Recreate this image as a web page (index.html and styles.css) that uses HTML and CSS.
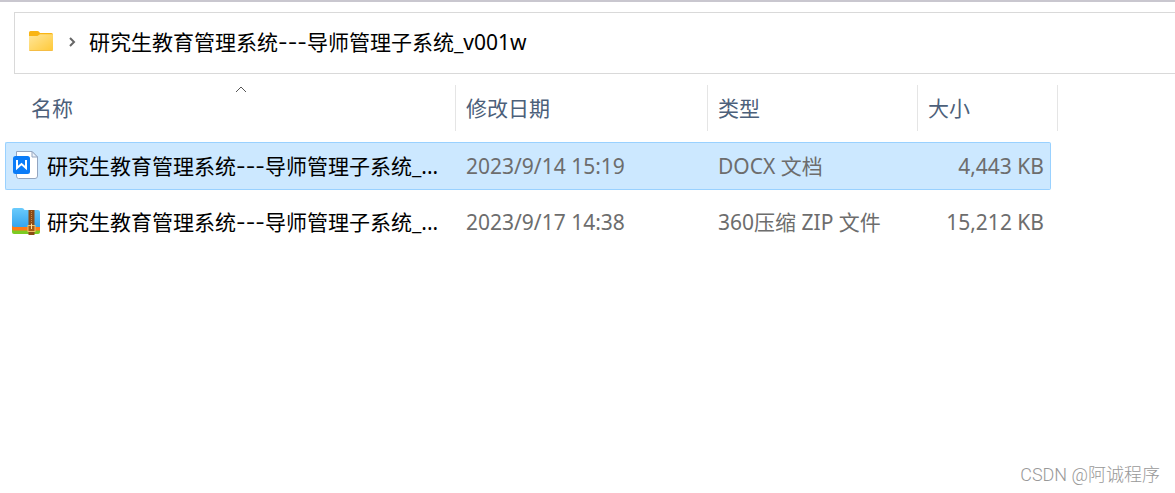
FILE: index.html
```html
<!DOCTYPE html>
<html lang="zh-CN">
<head>
    <meta charset="UTF-8">
    <meta name="viewport" content="width=device-width, initial-scale=1.0">
    <title>研究生教育管理系统</title>
    <link rel="stylesheet" href="styles.css">
</head>
<body>
    <nav class="address-bar">
        <svg class="folder-icon" viewBox="0 0 26 22">
            <defs>
                <linearGradient id="folder" x1="0" y1="0" x2="1" y2="1">
                    <stop offset="0" stop-color="#ffe69b"/>
                    <stop offset="1" stop-color="#ffc937"/>
                </linearGradient>
            </defs>
            <path d="M1 2.500Q1 1 2.500 1H9.500Q11 1 12 3H23.500Q25 3 25 4.500V12H1Z" fill="#f9b515"/>
            <path d="M1 6H9.500L12 4.200H25V19.500Q25 21 23.500 21H2.500Q1 21 1 19.500Z" fill="url(#folder)"/>
            <path d="M1.500 20.500H24.500" stroke="#f5bd45" fill="none"/>
        </svg>
        <svg class="chevron" viewBox="0 0 8 12">
            <path d="M2 2L6 6L2 10" fill="none" stroke="#666" stroke-width="2"/>
        </svg>
        <span>研究生教育管理系统<span class="dash">---</span>导师管理子系统_v001w</span>
    </nav>

    <main>
        <table>
            <colgroup>
                <col>
                <col class="col-date">
                <col class="col-type">
                <col class="col-size">
                <col class="col-end">
            </colgroup>
            <thead>
                <tr>
                    <th>
                        <div class="head head-name">名称
                            <svg class="sort-icon" viewBox="0 0 12 7">
                                <path d="M1 6L6 1L11 6" fill="none" stroke="#555"/>
                            </svg>
                        </div>
                    </th>
                    <th><div class="head">修改日期</div></th>
                    <th><div class="head">类型</div></th>
                    <th colspan="2"><div class="head">大小</div></th>
                </tr>
            </thead>
            <tbody>
                <tr class="selected">
                    <td class="name">
                        <div class="file">
                            <svg class="file-icon" viewBox="0 0 30 30">
                                <path d="M5.500 1.500H21L26.500 7V26Q26.500 28.500 24 28.500H7.500Q5.500 28.500 5.500 26Z" fill="#fff" stroke="#93a5c0"/>
                                <path d="M21 1.500V7H26.500Z" fill="#eef3fa" stroke="#93a5c0"/>
                                <rect x="2" y="6" width="17" height="18" rx="2.500" fill="#0a7cf8"/>
                                <path d="M6 10V18L10.500 14L15 18V10" fill="none" stroke="#fff" stroke-width="2"/>
                            </svg>
                            <span>研究生教育管理系统<span class="dash">---</span>导师管理子系统_...</span>
                        </div>
                    </td>
                    <td>2023/9/14 15:19</td>
                    <td>DOCX 文档</td>
                    <td class="size">4,443 KB</td>
                </tr>
                <tr>
                    <td class="name">
                        <div class="file">
                            <svg class="file-icon" viewBox="0 0 30 30">
                                <defs>
                                    <linearGradient id="zip" x1="0" y1="0" x2="0" y2="1">
                                        <stop offset="0" stop-color="#6acbfc"/>
                                        <stop offset="1" stop-color="#35a5ee"/>
                                    </linearGradient>
                                </defs>
                                <path d="M1 22H29V26Q29 28 27 28H3Q1 28 1 26Z" fill="#7ccb22"/>
                                <path d="M1 18H29V24.500H3Q1 24.500 1 22Z" fill="#ff7a18"/>
                                <path d="M1 4Q1 2 3 2H11Q12.500 2 13.500 4H27Q29 4 29 6V21H3Q1 21 1 19Z" fill="url(#zip)"/>
                                <rect x="17.500" y="4" width="6" height="25" fill="#8a4b16"/>
                                <path d="M20.500 5V19" stroke="#c98a45" stroke-dasharray="1 1"/>
                                <rect x="17" y="19.500" width="7" height="6" fill="#a85b12" stroke="#f0c068"/>
                                <path d="M20.500 18V23" stroke="#ffe0a0"/>
                            </svg>
                            <span>研究生教育管理系统<span class="dash">---</span>导师管理子系统_...</span>
                        </div>
                    </td>
                    <td>2023/9/17 14:38</td>
                    <td>360压缩 ZIP 文件</td>
                    <td class="size">15,212 KB</td>
                </tr>
            </tbody>
        </table>
    </main>

    <footer>CSDN @阿诚程序</footer>
</body>
</html>
```
FILE: styles.css
```css
* {
    box-sizing: border-box;
}

body {
    font-family: "Noto Sans", "Noto Sans CJK SC", sans-serif;
    font-size: 21px;
    line-height: 30px;
    margin: 0;
    min-height: 100vh;
    display: flex;
    flex-direction: column;
    background-color: #fff;
    color: #000;
    border-top: 2px solid #c9c7cf;
}

.address-bar {
    display: flex;
    align-items: center;
    height: 62px;
    margin: 10px 0 3px 14px;
    padding: 0 0 2px 13px;
    border: 1px solid #d9d9d9;
    border-right: none;
}

.folder-icon {
    width: 26px;
    height: 22px;
    margin: 0 14px 2px 0;
}

.chevron {
    width: 8px;
    height: 12px;
    margin-right: 13px;
}

/* 连字符 */
.dash {
    font-family: Inter, sans-serif;
}

main {
    padding: 0 117px 0 5px;
}

table {
    width: 100%;
    table-layout: fixed;
    border-collapse: separate;
    border-spacing: 0 8px;
}

.col-date {
    width: 252px;
}

.col-type {
    width: 210px;
}

.col-size {
    width: 133px;
}

.col-end {
    width: 7px;
}

th {
    height: 49px;
    padding: 0;
    text-align: left;
    vertical-align: top;
    font-weight: normal;
    color: #4c607a;
}

.head {
    position: relative;
    height: 46px;
    padding: 8px 10px;
    border-right: 1px solid #e5e5e5;
}

.head-name {
    padding-left: 26px;
}

/* 排序箭头 */
.sort-icon {
    position: absolute;
    top: 1px;
    left: 51%;
    width: 12px;
    height: 7px;
}

td {
    height: 48px;
    padding: 0 10px;
    border: 1px solid transparent;
    border-width: 1px 0;
    white-space: nowrap;
    color: #6d6d6d;
}

.name {
    padding: 0 0 0 5px;
    border-left-width: 1px;
    border-radius: 2px 0 0 2px;
    color: #000;
}

.size {
    padding-right: 6px;
    border-right-width: 1px;
    border-radius: 0 2px 2px 0;
    text-align: right;
}

.selected td {
    background-color: #cce8ff;
    border-color: #99d1ff;
}

.file {
    display: flex;
    align-items: center;
    gap: 6px;
}

.file-icon {
    width: 30px;
    height: 30px;
    margin-bottom: 2px;
}

footer {
    margin-top: auto;
    padding: 0 15px 4px;
    font-family: Roboto, "Noto Sans CJK SC", sans-serif;
    font-size: 18px;
    line-height: 28px;
    font-weight: 300;
    text-align: right;
    color: #999;
}
```
